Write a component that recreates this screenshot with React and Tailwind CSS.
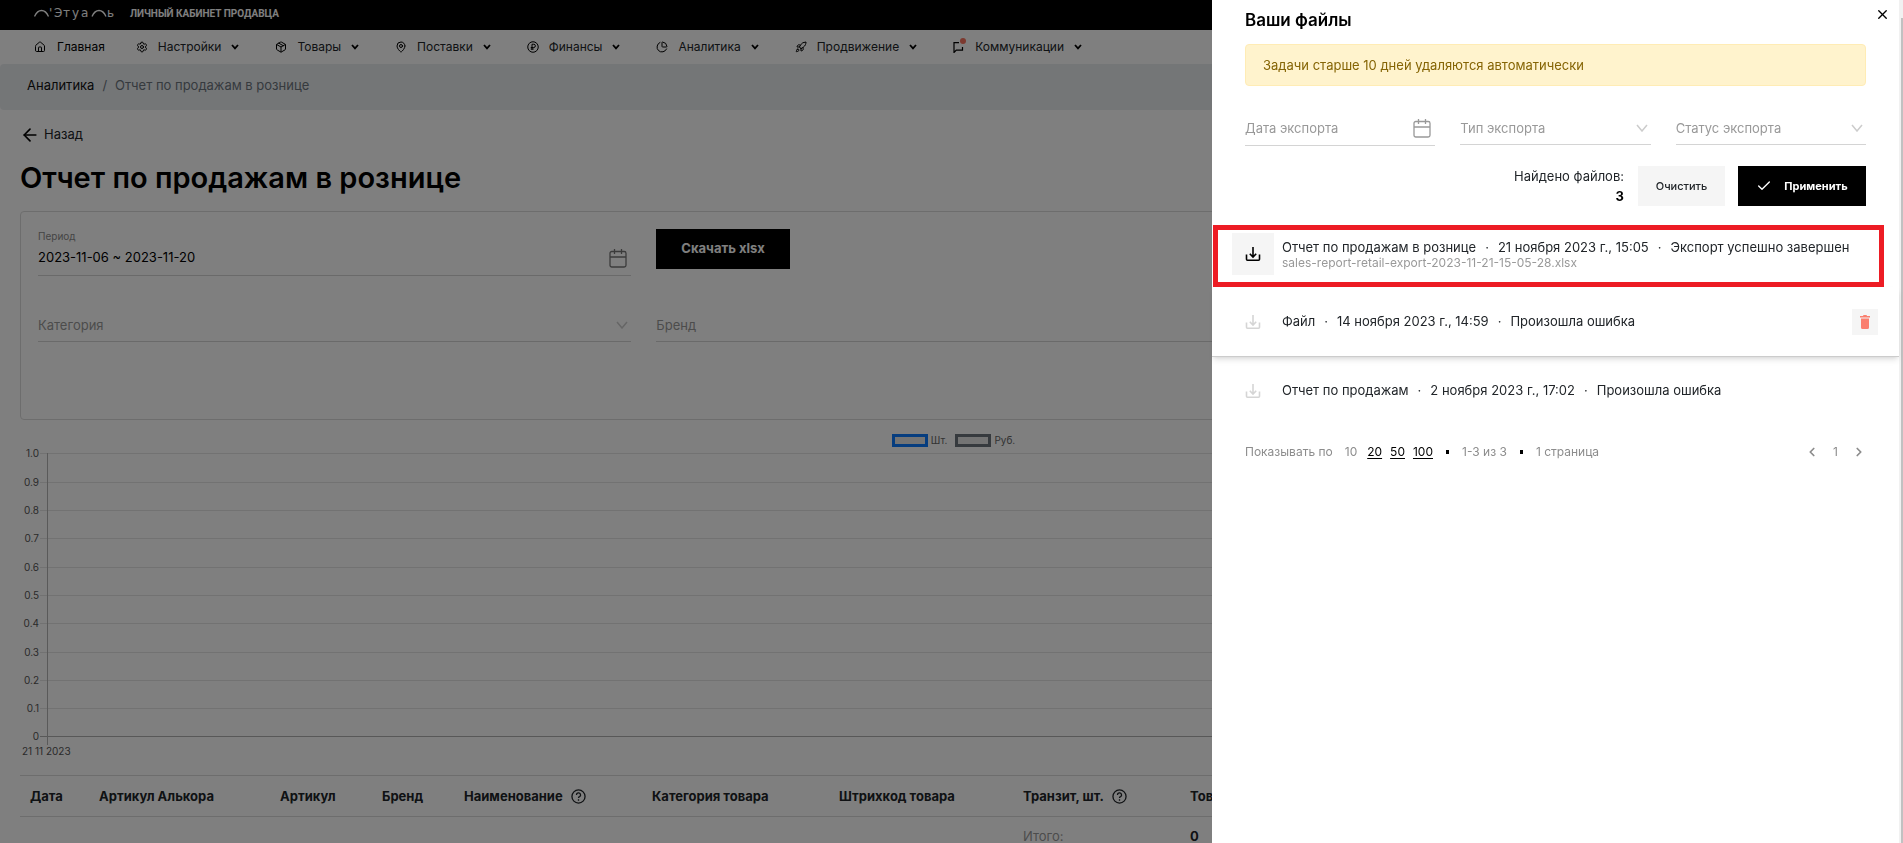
import React from "react";
import {
  ArrowLeft,
  Check,
  ChevronLeft,
  ChevronRight,
  House,
  MapPin,
  Package,
  ChartPie,
  Rocket,
  Settings,
  X,
} from "lucide-react";

function Logo() {
  return (
    <svg viewBox="0 0 82 14" className="h-[14px] w-[82px] text-white" fill="none" role="img" aria-label="Л'Этуаль">
      <path d="M0.5 10.5 C4 2.500 11 2.500 14.500 10.5" stroke="currentColor" strokeWidth="1.300" />
      <path d="M58 10.5 C61.500 2.500 68.500 2.500 72 10.5" stroke="currentColor" strokeWidth="1.300" />
      <g fill="currentColor" fontFamily="DejaVu Sans, sans-serif" fontSize="12">
        <text x="15" y="11">'</text>
        <text x="20" y="11">Э</text>
        <text x="29" y="11">т</text>
        <text x="38" y="11">у</text>
        <text x="47" y="11">а</text>
        <text x="73" y="11">ь</text>
      </g>
    </svg>
  );
}

function RubleIcon({ className }) {
  return (
    <svg viewBox="0 0 24 24" className={className} fill="none" stroke="currentColor" strokeWidth="2">
      <circle cx="12" cy="12" r="10.500" />
      <path d="M10 18V6.500h3.500a3.200 3.200 0 0 1 0 6.500H7.500M7.500 16h6" />
    </svg>
  );
}

function MessageIcon({ className }) {
  return (
    <span className="relative">
      <svg viewBox="0 0 12 12" className={className} fill="none" stroke="currentColor" strokeWidth="1.200">
        <path d="M6 1.600H1v9.900L3.300 9.200H9.500V6" />
      </svg>
      <span className="absolute -top-[3px] -right-px size-[6px] rounded-full bg-[#f9735f]" />
    </span>
  );
}

function CalendarIcon({ className }) {
  return (
    <svg viewBox="0 0 18 19" className={className} fill="none" stroke="currentColor" strokeWidth="1.300">
      <rect x="1" y="2.500" width="16" height="15.500" rx="1.800" />
      <path d="M1 8H17M5.500 0V5M12.500 0V5" />
    </svg>
  );
}

function CaretIcon({ className }) {
  return (
    <svg viewBox="0 0 12 8" className={className} fill="none" stroke="currentColor" strokeWidth="1.500">
      <path d="M1 1L6 7L11 1" />
    </svg>
  );
}

function NavCaret() {
  return (
    <svg viewBox="0 0 8 6" className="h-[6px] w-2" fill="none" stroke="currentColor" strokeWidth="1.800">
      <path d="M1 1L4 4.300L7 1" />
    </svg>
  );
}

function DownloadIcon() {
  return (
    <svg viewBox="0 0 16 16" className="size-4" fill="none" stroke="currentColor" strokeWidth="1.600">
      <path d="M8 1V11M4.800 7.800L8 11L11.200 7.800M1.500 8.500V13.200A1 1 0 0 0 2.500 14.200H13.500A1 1 0 0 0 14.500 13.200V8.500" />
    </svg>
  );
}

function TrashIcon() {
  return (
    <svg viewBox="0 0 10 14" className="h-[14px] w-[10px]" fill="currentColor">
      <path d="M3.500 0H6.500L7 1H10V2.500H0V1H3ZM1 3.500H9V12.500A1.500 1.500 0 0 1 7.500 14H2.500A1.500 1.500 0 0 1 1 12.500Z" />
    </svg>
  );
}

function HelpIcon() {
  return (
    <svg viewBox="0 0 16 16" className="size-[15px]" fill="none" stroke="currentColor" strokeWidth="1.400">
      <circle cx="8" cy="8" r="7" />
      <path d="M5.800 6.300a2.200 2.200 0 1 1 3.300 1.900C8.300 8.600 8 9 8 9.700M8 11V12.400" />
    </svg>
  );
}

const NAV = [
  { label: "Настройки", icon: Settings },
  { label: "Товары", icon: Package },
  { label: "Поставки", icon: MapPin },
  { label: "Финансы", icon: RubleIcon },
  { label: "Аналитика", icon: ChartPie },
  { label: "Продвижение", icon: Rocket },
  { label: "Коммуникации", icon: MessageIcon },
];

const TICKS = ["1.0", "0.9", "0.8", "0.7", "0.6", "0.5", "0.4", "0.3", "0.2", "0.1"];

function tickHeight(i) {
  return i % 3 === 0 && i < 9 ? "h-[29px]" : "h-7";
}

function GridLines() {
  return (
    <>
      {TICKS.map((tick, i) => (
        <span key={tick} className={tickHeight(i) + " block border-t border-[#e5e5e5]"} />
      ))}
      <span className="block border-t border-[#b0b0b0]" />
    </>
  );
}

function SelectField({ label, className }) {
  return (
    <div className={"relative border-b border-[#d4d4d4] " + className}>
      <select aria-label={label} className="h-full w-full appearance-none bg-transparent pt-[2px] text-[13px] text-[#999] outline-none">
        <option>{label}</option>
      </select>
      <CaretIcon className="pointer-events-none absolute top-1/2 right-[3px] h-2 w-3 -translate-y-1/2 text-[#ccc]" />
    </div>
  );
}

function Filters() {
  return (
    <section className="mt-4 grid h-[209px] grid-cols-3 content-start gap-x-[25px] rounded border border-[#dadada] pt-[17px] pr-[14px] pl-[17px]">
      <div className="border-b border-[#d4d4d4]">
        <label htmlFor="period" className="block h-[14px] text-[10px] leading-[14px] text-[#8a8a8a]">
          Период
        </label>
        <div className="flex h-8 items-center justify-between pr-1 pb-[2px]">
          <input id="period" defaultValue="2023-11-06 ~ 2023-11-20" className="min-w-0 flex-1 bg-transparent text-[13px] text-black outline-none" />
          <CalendarIcon className="h-[19px] w-[18px] text-[#777]" />
        </div>
      </div>
      <div>
        <button className="h-10 bg-black px-[25px] text-[13px] font-bold text-white">Скачать xlsx</button>
      </div>
      <div />
      <SelectField label="Категория" className="mt-8 h-[34px]" />
      <SelectField label="Бренд" className="mt-8 h-[34px]" />
    </section>
  );
}

function Chart() {
  return (
    <section className="mt-3">
      <div className="flex h-4 items-center justify-center gap-2 pl-1 text-[10px] text-[#666]">
        <span className="flex items-center gap-[3px]">
          <span className="h-[13px] w-9 border-[3px] border-[#0d7bff] bg-[#e9e9e9]" />
          Шт.
        </span>
        <span className="flex items-center gap-[3px]">
          <span className="h-[13px] w-9 border-[3px] border-[#6c757d] bg-[#e9e9e9]" />
          Руб.
        </span>
      </div>
      <div className="mt-[5px] flex">
        <div className="flex w-[19px] flex-col pb-2 text-right text-[10px] text-[#555]">
          {TICKS.map((tick, i) => (
            <span key={tick} className={tickHeight(i) + " block leading-[1px]"}>
              {tick}
            </span>
          ))}
          <span className="block h-px leading-[1px]">0</span>
        </div>
        <div className="flex w-2 flex-col pl-px">
          <GridLines />
        </div>
        <div className="flex flex-1 flex-col border-l border-[#b5b5b5]">
          <GridLines />
        </div>
      </div>
      <p className="pl-[2px] text-[10px] leading-3 text-[#555]">21 11 2023</p>
    </section>
  );
}

function Heading({ children, help }) {
  return (
    <th className="h-[41px] pt-px pl-[10px] font-bold">
      <span className="flex items-center gap-2 whitespace-nowrap">
        {children}
        {help && <HelpIcon />}
      </span>
    </th>
  );
}

function SalesTable() {
  return (
    <table className="mt-[18px] w-full table-fixed border-collapse text-left text-[13px] text-[#212529]">
      <colgroup>
        <col className="w-[69px]" />
        <col className="w-[181px]" />
        <col className="w-[102px]" />
        <col className="w-[82px]" />
        <col className="w-[188px]" />
        <col className="w-[187px]" />
        <col className="w-[184px]" />
        <col className="w-[167px]" />
        <col />
      </colgroup>
      <thead>
        <tr className="border-y border-[#dadada]">
          <Heading>Дата</Heading>
          <Heading>Артикул Алькора</Heading>
          <Heading>Артикул</Heading>
          <Heading>Бренд</Heading>
          <Heading help>Наименование</Heading>
          <Heading>Категория товара</Heading>
          <Heading>Штрихкод товара</Heading>
          <Heading help>Транзит, шт.</Heading>
          <Heading>Товар</Heading>
        </tr>
      </thead>
      <tbody className="leading-3">
        <tr>
          <td colSpan={7} />
          <td className="h-[38px] pl-[10px] text-[#999]">Итого:</td>
          <td className="pl-[10px] font-bold">0</td>
        </tr>
      </tbody>
    </table>
  );
}

function FileRow({ title, date, status, file, active, variant }) {
  const frames = {
    framed: "mr-[15px] ml-px h-[62px] border-[5px] border-[#ed1c24] pr-2 pb-1 pl-[14px]",
    raised: "h-[70px] border-b border-[#ccc] pr-[21px] pl-5 shadow-md",
    plain: "h-[68px] pr-[21px] pl-5",
  };
  return (
    <li className={"flex items-center " + frames[variant]}>
      <button
        aria-label="Скачать"
        disabled={!active}
        className={"grid h-[42px] w-[42px] shrink-0 place-items-center " + (active ? "bg-[#f5f5f5] text-black" : "text-[#d5d5d5]")}
      >
        <DownloadIcon />
      </button>
      <div className="ml-2 flex-1">
        <p className="flex h-[17px] items-center gap-[9px] text-[13px] whitespace-nowrap text-[#212529]">
          <span>{title}</span>
          <span>·</span>
          <span>{date}</span>
          <span>·</span>
          <span>{status}</span>
        </p>
        {file && <p className="h-3 text-[12px] leading-3 text-[#999]">{file}</p>}
      </div>
      {variant === "raised" && (
        <button aria-label="Удалить" className="grid size-[26px] place-items-center bg-[#f5f5f5] text-[#fa7f6f]">
          <TrashIcon />
        </button>
      )}
    </li>
  );
}

function FilesPanel() {
  return (
    <aside className="fixed inset-y-0 right-0 flex w-[691px] bg-white">
      <div className="relative min-w-0 flex-1">
        <button aria-label="Закрыть" className="absolute top-[7px] right-[9px]">
          <X className="size-[15px]" strokeWidth={2.2} />
        </button>
        <div className="px-[33px]">
          <h2 className="pt-2 text-[17px] leading-6 font-semibold text-black">Ваши файлы</h2>
          <p className="mt-3 h-[42px] rounded border border-[#ffecb5] bg-[#fff3cd] px-[17px] text-[13px] leading-10 text-[#856404]">
            Задачи старше 10 дней удаляются автоматически
          </p>
          <div className="mt-[25px] grid grid-cols-3 items-start gap-[25px]">
            <div className="flex h-[35px] items-center border-b border-[#d4d4d4] pr-1">
              <input aria-label="Дата экспорта" placeholder="Дата экспорта" className="min-w-0 flex-1 pt-[2px] text-[13px] outline-none placeholder:text-[#999]" />
              <CalendarIcon className="h-[19px] w-[18px] text-[#999]" />
            </div>
            <SelectField label="Тип экспорта" className="h-[34px]" />
            <SelectField label="Статус экспорта" className="h-[34px]" />
          </div>
          <div className="mt-5 flex justify-end">
            <p className="mr-[14px] text-right text-[13px] leading-5 text-[#212529]">
              Найдено файлов:
              <b className="block text-black">3</b>
            </p>
            <button className="mr-[13px] h-10 w-[87px] bg-[#f5f5f5] text-[11px] font-medium text-[#212529]">Очистить</button>
            <button className="flex h-10 w-32 items-center justify-center gap-3 bg-black text-[11px] font-bold text-white">
              <Check className="size-4" strokeWidth={2} />
              Применить
            </button>
          </div>
        </div>
        <ul className="mt-[19px]">
          <FileRow
            title="Отчет по продажам в рознице"
            date="21 ноября 2023 г., 15:05"
            status="Экспорт успешно завершен"
            file="sales-report-retail-export-2023-11-21-15-05-28.xlsx"
            active
            variant="framed"
          />
          <FileRow title="Файл" date="14 ноября 2023 г., 14:59" status="Произошла ошибка" variant="raised" />
          <FileRow title="Отчет по продажам" date="2 ноября 2023 г., 17:02" status="Произошла ошибка" variant="plain" />
        </ul>
        <footer className="mt-[17px] flex h-5 items-center px-[33px] text-[12px] text-[#8c8c8c]">
          <span className="mr-3">Показывать по</span>
          <span>10</span>
          <a href="#20" className="ml-[10px] text-black underline underline-offset-2">20</a>
          <a href="#50" className="ml-2 text-black underline underline-offset-2">50</a>
          <a href="#100" className="ml-2 text-black underline underline-offset-2">100</a>
          <span className="mx-[13px] h-1 w-[3px] bg-black" />
          <span>1-3 из 3</span>
          <span className="mx-[13px] h-1 w-[3px] bg-black" />
          <span>1 страница</span>
          <div className="ml-auto flex items-center gap-[14px]">
            <button aria-label="Назад">
              <ChevronLeft className="size-[14px]" strokeWidth={3} />
            </button>
            <span>1</span>
            <button aria-label="Вперед">
              <ChevronRight className="size-[14px]" strokeWidth={3} />
            </button>
          </div>
        </footer>
      </div>
      <div className="w-1 bg-[#f1f1f1] pt-[18px] pl-[2px]">
        <div className="h-full bg-[#c1c1c1]" />
      </div>
    </aside>
  );
}

export default function App() {
  return (
    <div className="h-screen overflow-hidden bg-white font-['Inter','Noto_Sans',sans-serif]">
      <header className="flex h-[30px] items-center gap-[14px] bg-black pb-1 pl-[34px]">
        <Logo />
        <span className="font-['Roboto',sans-serif] text-[10px] font-bold text-white">ЛИЧНЫЙ КАБИНЕТ ПРОДАВЦА</span>
      </header>
      <nav className="flex h-[34px] items-center gap-9 pl-[34px] text-[12px] text-[#212529]">
        <a href="#home" className="-mr-[5px] flex items-center gap-[11px] text-black">
          <House className="size-3" strokeWidth={2} />
          Главная
        </a>
        {NAV.map(({ label, icon: Icon }) => (
          <button key={label} className="flex items-center gap-[10px]">
            <Icon className="size-3 text-black" strokeWidth={2} />
            {label}
            <span className="text-black">
              <NavCaret />
            </span>
          </button>
        ))}
      </nav>
      <div className="flex h-[46px] gap-2 rounded bg-[#e9ecef] pt-[11px] pl-[27px] text-[13px] leading-5">
        <a href="#analytics" className="text-[#111]">Аналитика</a>
        <span className="text-[#6c757d]">/</span>
        <span className="text-[#6c757d]">Отчет по продажам в рознице</span>
      </div>
      <main className="px-5">
        <a href="#back" className="mt-[15px] flex h-5 items-center gap-1 text-[13px] text-[#212529]">
          <ArrowLeft className="size-5 text-black" strokeWidth={2} />
          Назад
        </a>
        <h1 className="mt-4 text-[29px] leading-[34px] font-semibold text-black">Отчет по продажам в рознице</h1>
        <Filters />
        <Chart />
        <SalesTable />
      </main>
      <div className="fixed inset-0 bg-black/50" />
      <FilesPanel />
    </div>
  );
}
